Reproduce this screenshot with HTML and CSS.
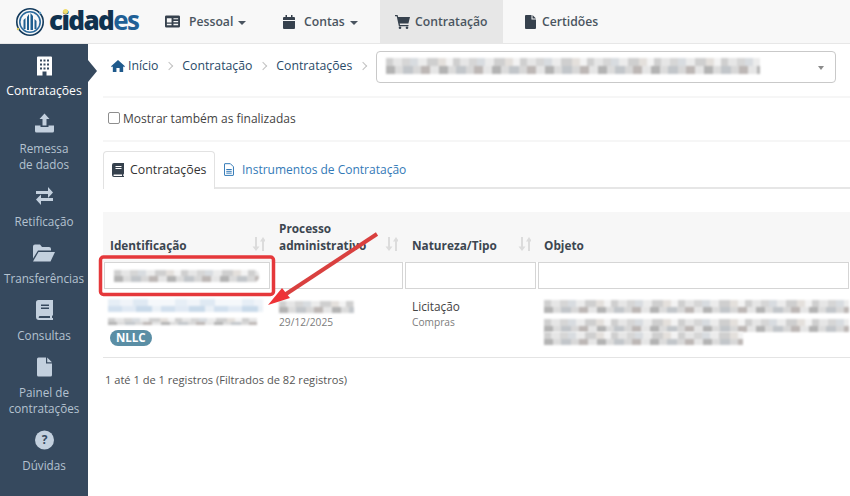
FILE: index.html
```html
<!DOCTYPE html>
<html lang="pt-BR">
<head>
<meta charset="utf-8">
<title>Cidades - Contratações</title>
<link rel="stylesheet" href="styles.css">
</head>
<body>
<header class="topbar">
  <a class="logo">
    <svg class="logo-mark" viewBox="0 0 30 30" width="30" height="30">
      <circle cx="15" cy="15" r="13.2" fill="none" stroke="#123a5c" stroke-width="1.6"/>
      <circle cx="15" cy="15" r="10.2" fill="none" stroke="#2a6a9c" stroke-width="1.6"/>
      <path d="M8.5 22V13l2-2v11zM12 23V10l2-3v16zM15.5 23V6l2.5 3v14zM19.500 22V12l2 2v8z" fill="#1f5f8f"/>
      <circle cx="3" cy="22" r="1.200" fill="#d9c95a"/><circle cx="25" cy="6" r="1.200" fill="#5a9ac4"/>
    </svg>
    <span class="logo-text">cidad<span class="logo-es">es</span></span>
    <i class="logo-dot"></i>
  </a>
  <nav class="nav">
    <a class="nav-item n1">
      <svg viewBox="0 0 16 13" width="15" height="13"><path fill-rule="evenodd" d="M1.500 0h13A1.500 1.500 0 0 1 16 1.500v10a1.500 1.500 0 0 1-1.500 1.500h-13A1.500 1.500 0 0 1 0 11.500v-10A1.500 1.500 0 0 1 1.500 0zM2 3v4.500h5V3zm7 0v1.200h5V3zm0 3v1.200h5V6zM2 9v1.500h5V9zm7 0v1.500h5V9z" fill="#36414d"/></svg>
      <span>Pessoal</span><b class="caret"></b>
    </a>
    <a class="nav-item n2">
      <svg viewBox="0 0 12 14" width="12" height="14"><path d="M2.500 0h1.500v2h4V0h1.500v2H11a1 1 0 0 1 1 1v2H0V3a1 1 0 0 1 1-1h1.500zM0 6h12v7a1 1 0 0 1-1 1H1a1 1 0 0 1-1-1z" fill="#36414d"/></svg>
      <span>Contas</span><b class="caret"></b>
    </a>
    <a class="nav-item n3 active">
      <svg viewBox="0 0 15 14" width="15" height="14"><path d="M0 0h2.600l.5 2H15l-1.600 6.500H4.700l.3 1.500h8.500v1.300H3.900L1.700 1.300H0z" fill="#36414d"/><circle cx="5" cy="12.700" r="1.300" fill="#36414d"/><circle cx="12" cy="12.700" r="1.300" fill="#36414d"/></svg>
      <span>Contratação</span>
    </a>
    <a class="nav-item n4">
      <svg viewBox="0 0 11 14" width="11" height="14"><path d="M1 0h5.500v4.500H11V13a1 1 0 0 1-1 1H1a1 1 0 0 1-1-1V1a1 1 0 0 1 1-1zM7.500 0 11 3.500H7.500z" fill="#36414d"/></svg>
      <span>Certidões</span>
    </a>
  </nav>
</header>

<div class="shell">
  <aside class="side">
    <a class="side-item current">
      <svg viewBox="0 0 15 19" width="15" height="19"><path fill-rule="evenodd" d="M1 0h13a1 1 0 0 1 1 1v18H9.500v-4h-4v4H0V1a1 1 0 0 1 1-1zM3 3v2h2V3zm3.500 0v2h2V3zM10 3v2h2V3zM3 7v2h2V7zm3.500 0v2h2V7zM10 7v2h2V7zM3 11v2h2v-2zm3.500 0v2h2v-2zM10 11v2h2v-2z" fill="#fff"/></svg>
      <span>Contratações</span>
    </a>
    <a class="side-item">
      <svg viewBox="0 0 19 19" width="19" height="19"><path d="M9.500 0l5 5.500H11.500V12h-4V5.500H4.500zM0 12h5.500v1.500h8V12H19v5.500a1.500 1.500 0 0 1-1.500 1.500h-16A1.500 1.500 0 0 1 0 17.500z" fill="#c3d0de"/></svg>
      <span>Remessa<br>de dados</span>
    </a>
    <a class="side-item">
      <svg viewBox="0 0 17 18" width="17" height="18"><path d="M0 4h12V0l5 5.500-5 5.500V7H0zM17 11v3H5v4l-5-5.500L5 7.500V11z" fill="#c3d0de"/></svg>
      <span>Retificação</span>
    </a>
    <a class="side-item">
      <svg viewBox="0 0 22 17" width="22" height="17"><path d="M0 2a2 2 0 0 1 2-2h5l2 2.500h7a2 2 0 0 1 2 2V6H5L0 14z" fill="#c3d0de"/><path d="M5.500 7.500H22L17.500 17H0z" fill="#c3d0de"/></svg>
      <span>Transferências</span>
    </a>
    <a class="side-item">
      <svg viewBox="0 0 17 20" width="17" height="20"><path fill-rule="evenodd" d="M2.500 0H17v15a2 2 0 0 1-1 1v2h1v2H3a3 3 0 0 1-3-3V2.500A2.500 2.500 0 0 1 2.500 0zM5 4.500V6h8V4.500zm0 3V9h8V7.500zM3 16.500a1 1 0 0 0 0 1.500h11v-2H3.500z" fill="#c3d0de"/></svg>
      <span>Consultas</span>
    </a>
    <a class="side-item">
      <svg viewBox="0 0 15 19" width="15" height="19"><path d="M1.500 0H9v6h6v11.500a1.500 1.500 0 0 1-1.500 1.500h-12A1.500 1.500 0 0 1 0 17.500v-16A1.500 1.500 0 0 1 1.500 0zM10.200 0 15 4.800h-4.800z" fill="#c3d0de"/></svg>
      <span>Painel de<br>contratações</span>
    </a>
    <a class="side-item">
      <svg viewBox="0 0 19 19" width="19" height="19"><circle cx="9.500" cy="9.500" r="9.500" fill="#c3d0de"/><text x="9.500" y="13.700" text-anchor="middle" class="q">?</text></svg>
      <span>Dúvidas</span>
    </a>
  </aside>

  <main class="main">
    <i class="notch"></i>
    <div class="crumbs">
      <svg class="home" viewBox="0 0 15 13" width="14" height="12"><path d="M7.500 0 15 6.800l-.9 1-1-.9V13H9.200V8.800H5.800V13H1.900V6.900l-1 .9-.9-1z" fill="#1f5a8c"/></svg>
      <a class="crumb first">Início</a><i class="sep"></i>
      <a class="crumb">Contratação</a><i class="sep"></i>
      <a class="crumb">Contratações</a><i class="sep"></i>
      <div class="select"><i class="blur blur-select"></i><b class="select-caret"></b></div>
    </div>
    <label class="check"><input type="checkbox"><span>Mostrar também as finalizadas</span></label>
    <div class="tabs">
      <a class="tab active">
        <svg viewBox="0 0 12 14" width="12" height="14"><path fill-rule="evenodd" d="M2 0h10v10.500a1 1 0 0 1-.7.900V13h.7v1H2a2 2 0 0 1-2-2V2a2 2 0 0 1 2-2zM3.500 3v1h6V3zm0 2v1h6V5zM2 11.500a.8.8 0 0 0 0 1.500h8v-1.500z" fill="#36414d"/></svg>
        <span>Contratações</span>
      </a>
      <a class="tab link">
        <svg viewBox="0 0 11 14" width="10" height="13"><path d="M1 .6h6l3.400 3.400V13a.5.500 0 0 1-.5.500H1a.5.500 0 0 1-.5-.5V1A.5.500 0 0 1 1 .6zM2.500 7h6M2.500 9h6M2.500 11h6" fill="none" stroke="#337ab7" stroke-width="1.100"/></svg>
        <span>Instrumentos de Contratação</span>
      </a>
    </div>
    <table class="grid">
      <colgroup><col class="c1"><col class="c2"><col class="c3"><col class="c4"></colgroup>
      <thead>
        <tr class="heads">
          <th><div class="th-in"><span>Identificação</span>
            <svg class="sort" viewBox="0 0 13 14" width="13" height="14"><path d="M3 0h2v9.500h2.500L4 14 .5 9.500H3zM8 4.500 11 0l3 4.500h-2V14h-2V4.500z" fill="#dcdcdc"/></svg></div></th>
          <th class="shifted"><div class="th-in"><span>Processo<br>administrativo</span>
            <svg class="sort" viewBox="0 0 13 14" width="13" height="14"><path d="M3 0h2v9.500h2.500L4 14 .5 9.500H3zM8 4.500 11 0l3 4.500h-2V14h-2V4.500z" fill="#dcdcdc"/></svg></div></th>
          <th class="shifted"><div class="th-in"><span>Natureza/Tipo</span>
            <svg class="sort" viewBox="0 0 13 14" width="13" height="14"><path d="M3 0h2v9.500h2.500L4 14 .5 9.500H3zM8 4.500 11 0l3 4.500h-2V14h-2V4.500z" fill="#dcdcdc"/></svg></div></th>
          <th><div class="th-in"><span>Objeto</span></div></th>
        </tr>
        <tr class="filters">
          <td><div class="fbox"><i class="blur blur-filter"></i></div></td>
          <td><div class="fbox"></div></td>
          <td><div class="fbox"></div></td>
          <td><div class="fbox"></div></td>
        </tr>
      </thead>
      <tbody>
        <tr class="row">
          <td>
            <i class="blur blur-link"></i>
            <i class="blur blur-sub"></i>
            <span class="badge">NLLC</span>
          </td>
          <td class="shifted">
            <i class="blur blur-proc"></i>
            <span class="muted">29/12/2025</span>
          </td>
          <td class="shifted">
            <span class="tipo">Licitação</span>
            <span class="muted small">Compras</span>
          </td>
          <td>
            <i class="blur blur-obj a"></i>
            <i class="blur blur-obj b"></i>
            <i class="blur blur-obj c"></i>
          </td>
        </tr>
      </tbody>
    </table>
    <p class="info">1 até 1 de 1 registros (Filtrados de 82 registros)</p>
  </main>
</div>

<svg class="overlay" viewBox="0 0 850 496" width="850" height="496">
  <rect x="100.500" y="257" width="173" height="37.500" rx="3" fill="none" stroke="#e5383b" stroke-width="3.500"/>
  <path d="M377 234 283 296" fill="none" stroke="#d9403f" stroke-width="4"/>
  <path d="M268 305 282 288 290 298z" fill="#ee3236"/>
</svg>
</body>
</html>
```

FILE: styles.css
```css
* { box-sizing: border-box; }
html, body { margin: 0; height: 100%; overflow: hidden; }
body {
  position: relative;
  width: 850px;
  height: 496px;
  font-family: "Open Sans", "Liberation Sans", sans-serif;
  font-size: 12px;
  color: #444;
  background: #fff;
}
a { text-decoration: none; color: inherit; }
i { font-style: normal; }

/* top bar */
.topbar {
  height: 44px;
  display: flex;
  background: #f8f8f8;
  border-bottom: 1px solid #e7e7e7;
}
.logo {
  position: relative;
  width: 150px;
  flex: none;
  display: flex;
  align-items: center;
  padding-left: 15px;
}
.logo-mark { flex: none; }
.logo-text {
  margin-left: 4px;
  margin-top: -3px;
  font-family: "Open Sans", sans-serif;
  font-size: 26px;
  font-weight: 800;
  letter-spacing: -1.600px;
  color: #10324f;
}
.logo-es { color: #1f6096; font-weight: 700; }
.logo-dot {
  position: absolute;
  left: 63px;
  top: 9px;
  width: 5px;
  height: 5px;
  border-radius: 50%;
  background: #f0dc6a;
}
.nav { display: flex; }
.nav-item {
  height: 43px;
  display: flex;
  align-items: center;
  gap: 9px;
  font-weight: 600;
  font-size: 12.200px;
  color: #4a5560;
}
.nav-item svg { flex: none; }
.n1 { padding-left: 15px; width: 118px; }
.n2 { padding-left: 15px; width: 112px; }
.n3 { padding-left: 15px; width: 123px; gap: 5px; background: #e7e7e7; }
.n4 { padding-left: 22px; gap: 6px; }
.caret {
  width: 0;
  height: 0;
  margin-left: -4px;
  margin-top: 2px;
  border: 4px solid transparent;
  border-top-color: #4a5560;
  border-bottom: 0;
}

/* shell */
.shell { display: flex; height: 452px; }
.side {
  width: 88px;
  flex: none;
  background: #36495e;
  padding-top: 12px;
}
.side-item {
  display: flex;
  flex-direction: column;
  align-items: center;
  color: #b4c2d0;
  font-size: 11.700px;
  line-height: 16.500px;
  text-align: center;
  padding-bottom: 13.400px;
}
.side-item svg { height: 20px; margin-bottom: 7px; display: block; }
.side-item.current { color: #fff; font-size: 12.200px; }
.q { font: 700 12px "Open Sans", sans-serif; fill: #36495e; }

/* main */
.main {
  position: relative;
  flex: 1;
  min-width: 0;
  padding-left: 15px;
  overflow: hidden;
}
.notch {
  position: absolute;
  left: 0;
  top: 16px;
  width: 0;
  height: 0;
  border-style: solid;
  border-width: 11px 0 11px 9px;
  border-color: transparent transparent transparent #36495e;
}
.crumbs {
  height: 54px;
  padding: 7px 0 0 8px;
  display: flex;
  align-items: flex-start;
  border-bottom: 2px solid #f6f6f6;
  color: #27496d;
}
.crumbs > * { flex: none; }
.home { margin-top: 9px; }
.crumb { margin-top: 6px; line-height: 18px; font-size: 12.250px; color: #2a4a68; }
.crumb.first { margin-left: 3px; }
.sep {
  width: 6px;
  height: 6px;
  margin: 12px 10px 0 8px;
  border-top: 1.300px solid #c2c2c2;
  border-right: 1.300px solid #c2c2c2;
  transform: rotate(45deg);
}
.select {
  width: 460px;
  height: 32px;
  position: relative;
  border: 1px solid #c9c9c9;
  border-radius: 4px;
  background: #fff;
}
.select-caret {
  position: absolute;
  right: 11px;
  top: 14px;
  border: 3.500px solid transparent;
  border-top: 4px solid #8b8b8b;
  border-bottom: 0;
}
.check {
  height: 44px;
  padding-bottom: 2px;
  display: flex;
  align-items: center;
  gap: 3px;
  color: #444;
  font-size: 12px;
  border-bottom: 2px solid #f6f6f6;
}
.check input {
  appearance: none;
  width: 12px;
  height: 12px;
  margin: 0 0 0 5px;
  border: 1px solid #8e8e8e;
  border-radius: 2px;
  background: #fff;
}
.tabs {
  margin-top: 9px;
  height: 38px;
  display: flex;
  align-items: stretch;
  border-bottom: 2px solid #e6e6e6;
}
.tab {
  display: flex;
  align-items: center;
  gap: 6px;
  padding: 0 8px 2px;
  font-size: 12px;
  margin-bottom: -2px;
}
.tab svg { flex: none; }
.tab.link { padding-left: 9px; gap: 8px; color: #337ab7; }
.tab.active {
  width: 112px;
  font-size: 12.350px;
  color: #333;
  background: #fff;
  border: 1px solid #e2e2e2;
  border-bottom: 0;
  border-radius: 4px 4px 0 0;
}
.grid {
  width: 747px;
  margin-top: 23px;
  table-layout: fixed;
  border-collapse: collapse;
}
.c1 { width: 168px; }
.c2 { width: 133px; }
.c3 { width: 133px; }
.heads th {
  height: 50px;
  padding: 0 6px 9px 7px;
  vertical-align: bottom;
  background: #f7f7f7;
  text-align: left;
  font-size: 11.800px;
  line-height: 16.500px;
  font-weight: 700;
  color: #3c4650;
}
.heads th.shifted { padding-left: 8px; }
.th-in { display: flex; align-items: flex-end; justify-content: space-between; }
.sort { flex: none; margin-bottom: 2px; }
.filters td { height: 29px; padding: 0 1px 2px; vertical-align: top; }
.fbox {
  height: 27px;
  position: relative;
  border: 1px solid #d5d5d5;
  background: #fff;
}
.row td {
  height: 66px;
  padding: 8px 7px 0;
  vertical-align: top;
  border-bottom: 1px solid #e4e4e4;
}
.row td.shifted { padding-left: 8px; }
.badge {
  display: inline-block;
  margin-top: 5px;
  padding: 0 6px;
  height: 16px;
  line-height: 16px;
  border-radius: 8px;
  background: #5a8ea5;
  color: #fff;
  font-size: 11.500px;
  font-weight: 700;
}
.muted { display: block; color: #7c7c7c; font-size: 10.200px; line-height: 14px; }
.tipo { display: block; color: #444; font-size: 11.800px; line-height: 15px; margin-bottom: 2px; }
.small { line-height: 13px; }
.info { margin: 14px 0 0 2px; font-size: 11.100px; line-height: 16px; color: #555; }

/* pixelated, blurred redactions */
.blur {
  display: block;
  filter: blur(1px);
  background-repeat: repeat-x;
  background-size: 67px 50%, 53px 50%;
  background-position: 0 0, 0 100%;
  background-image:
    linear-gradient(90deg, #cfcfcf 0 7px, #e6e6e6 7px 16px, #d6d6d6 16px 24px, #d8dce0 24px 32px, #ececec 32px 41px, #cfcfcf 41px 52px, #e4e0dc 52px 60px, #f3f3f3 60px),
    linear-gradient(90deg, #b3b3b3 0 9px, #dcdcdc 9px 17px, #c2c6ca 17px 27px, #d8d8d8 27px 35px, #bdb7b5 35px 44px, #e6e6e6 44px);
}
.blur-select { position: absolute; left: 9px; top: 6px; width: 374px; height: 16px; }
.blur-filter { position: absolute; left: 9px; top: 7px; width: 145px; height: 12px; border-radius: 0 5px 5px 0; }
.blur-link {
  width: 155px;
  height: 13px;
  margin-left: -2px;
  background-image:
    linear-gradient(90deg, #e6eef6 0 12px, #f0f4f9 12px 25px, #dfe9f3 25px 40px, #f5f8fb 40px),
    linear-gradient(90deg, #d2e0ee 0 14px, #e1eaf4 14px 28px, #c9daea 28px 44px, #ebf1f7 44px);
}
.blur-sub { width: 149px; height: 7px; margin: 6px 0 0 -2px; }
.blur-proc { width: 75px; height: 12px; margin-top: 2px; margin-bottom: 2px; }
.blur-obj { height: 13px; }
.blur-obj.a { width: 305px; margin-top: 1px; }
.blur-obj.b { width: 305px; margin-top: 6px; }
.blur-obj.c { width: 199px; }

/* annotation */
.overlay { position: absolute; left: 0; top: 0; pointer-events: none; }
```
